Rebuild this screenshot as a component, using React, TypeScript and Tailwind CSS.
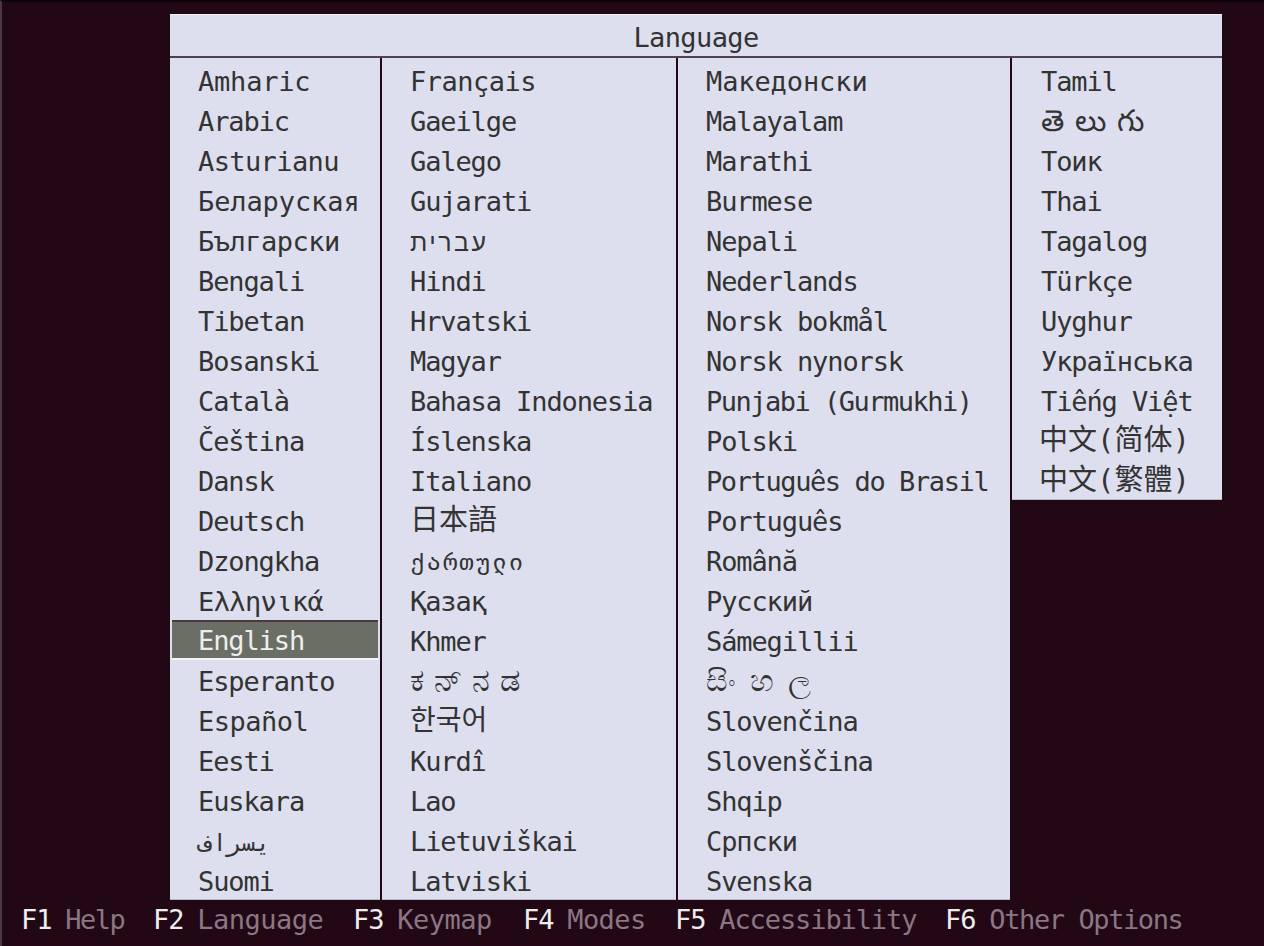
const columns = [
  {
    width: "w-[210px]",
    pad: "pl-[28px]",
    items: ["Amharic", "Arabic", "Asturianu", "Беларуская", "Български", "Bengali", "Tibetan", "Bosanski", "Català", "Čeština", "Dansk", "Deutsch", "Dzongkha", "Ελληνικά", "English", "Esperanto", "Español", "Eesti", "Euskara", "فارسی", "Suomi"],
  },
  {
    width: "w-[294px]",
    pad: "pl-[28px]",
    items: ["Français", "Gaeilge", "Galego", "Gujarati", "עברית", "Hindi", "Hrvatski", "Magyar", "Bahasa Indonesia", "Íslenska", "Italiano", "日本語", "ქართული", "Қазақ", "Khmer", "ಕನ್‌ನಡ", "한국어", "Kurdî", "Lao", "Lietuviškai", "Latviski"],
  },
  {
    width: "w-[332px]",
    pad: "pl-[28px]",
    items: ["Македонски", "Malayalam", "Marathi", "Burmese", "Nepali", "Nederlands", "Norsk bokmål", "Norsk nynorsk", "Punjabi (Gurmukhi)", "Polski", "Português do Brasil", "Português", "Română", "Русский", "Sámegillii", "සිංහල", "Slovenčina", "Slovenščina", "Shqip", "Српски", "Svenska"],
  },
  {
    width: "w-[210px]",
    pad: "pl-[29px]",
    items: ["Tamil", "తెలుగు", "Тоик", "Thai", "Tagalog", "Türkçe", "Uyghur", "Українська", "Tiếng Việt", "中文(简体)", "中文(繁體)"],
  },
];

const tune: Record<string, string> = {
  Amharic: "tracking-[-0.2px]",
  Asturianu: "tracking-[-0.6px]",
  "Беларуская": "tracking-[-0.1px]",
  "Български": "tracking-[-0.5px]",
  "Македонски": "tracking-[-0.1px]",
  "Français": "tracking-[-0.5px]",
  "Punjabi (Gurmukhi)": "tracking-[-1.5px]",
  "Português do Brasil": "tracking-[-1.4px]",
  "Español": "tracking-[-0.5px]",
  "Ελληνικά": "tracking-[-0.6px]",
  "فارسی": "text-[24px] tracking-[1px] [unicode-bidi:bidi-override] [direction:ltr]",
  "עברית": "font-['Liberation_Sans'] text-[25px] tracking-[2.5px] w-fit [direction:rtl]",
  "日本語": "text-[29px] tracking-[0px] pb-[4px]",
  "한국어": "text-[28px] tracking-[0px] pb-[4px]",
  "ქართული": "text-[24px] tracking-[2px] pb-[2px]",
  "ಕನ್‌ನಡ": "text-[32px] tracking-[10px] pb-[5px]",
  "සිංහල": "text-[30px] tracking-[14px] pb-[5px]",
  "తెలుగు": "text-[30px] tracking-[11px] pb-[5px]",
  "中文(简体)": "text-[29px] tracking-[0px] pb-[4px] ml-[-2px]",
  "中文(繁體)": "text-[29px] tracking-[0px] pb-[4px] ml-[-2px]",
};

const footer = [
  ["F1", "Help", "w-[132px]", "tracking-[-1.5px]"],
  ["F2", "Language", "w-[200px]", "tracking-[-0.5px]"],
  ["F3", "Keymap", "w-[170px]", "tracking-[-0.5px]"],
  ["F4", "Modes", "w-[152px]", "tracking-[-0.6px]"],
  ["F5", "Accessibility", "w-[270px]", ""],
  ["F6", "Other Options", "", "tracking-[-1.4px]"],
];

const mono = "font-['DejaVu_Sans_Mono','Noto_Sans_CJK_SC','Noto_Sans_CJK_KR','Noto_Sans_CJK_JP',monospace]";

export default function App() {
  return (
    <div className={`flex h-[946px] w-[1264px] flex-col overflow-hidden border-t-2 border-l-2 border-t-[#0c0409] border-l-[#4a3842] bg-[#220815] text-[27px] tracking-[-1.1px] ${mono}`}>
      <div className="mt-[12px] ml-[168px] flex w-[1052px] flex-col">
        <div className="flex h-[42px] items-center justify-center border-t border-[#f4f4f8] bg-[#dedfee] pt-[6px] tracking-[-0.6px] text-[#333333]">Language</div>
        <div className="h-[2px] bg-[#54404c]" />
        <div className="flex h-[842px] items-start gap-[2px]">
          {columns.map((col, c) => (
            <div key={c} className={`${col.width} ${c === 3 ? "h-[442px]" : "h-[842px]"} shrink-0 border-b border-[#b9b6c6] bg-[#dedfee] pt-[2px]`}>
              {col.items.map((item) =>
                item === "English" ? (
                  <div key={item} className="mx-[2px] flex h-[40px] items-center border-t-2 border-b-2 border-t-[#4a3842] border-b-[#f4f4f8] bg-[#6b6e65] pt-[3px] pl-[26px] text-[#eeeeee]">
                    {item}
                  </div>
                ) : (
                  <div key={item} className={`flex h-[40px] items-center whitespace-nowrap pt-[5px] ${col.pad} text-[#333333]`}>
                    <span className={tune[item] ?? ""}>{item}</span>
                  </div>
                )
              )}
            </div>
          ))}
        </div>
      </div>
      <div className="mt-[-1px] ml-[19px] flex h-[38px] items-center whitespace-pre pt-[5px]">
        {footer.map(([key, label, width, track]) => (
          <div key={key} className={`${width} flex shrink-0 gap-[14px]`}>
            <span className="text-[#eeeeee]">{key}</span>
            <span className={`text-[#8b7685] ${track}`}>{label}</span>
          </div>
        ))}
      </div>
    </div>
  );
}
